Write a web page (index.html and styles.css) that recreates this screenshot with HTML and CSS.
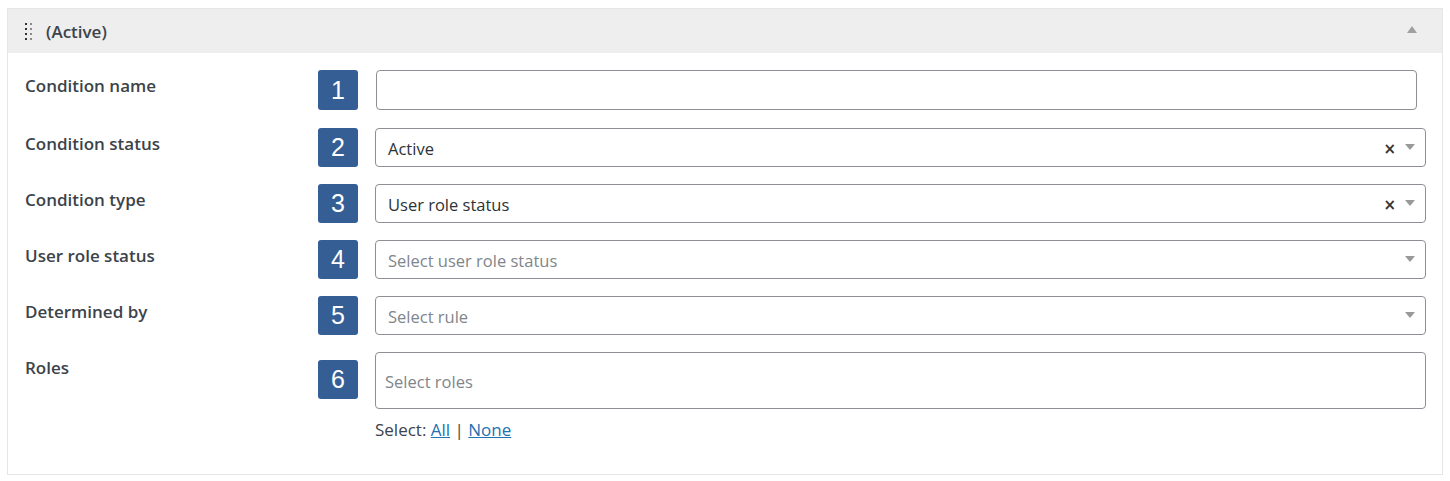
FILE: index.html
```html
<!DOCTYPE html>
<html>
<head>
<meta charset="utf-8">
<link rel="stylesheet" href="styles.css">
</head>
<body>
<div class="panel">
  <div class="panel-head">
    <span class="handle">
      <i></i><i></i><i></i><i></i><i></i><i></i><i></i><i></i>
    </span>
    <span class="head-title">(Active)</span>
    <span class="toggle"></span>
  </div>
  <div class="panel-body">
    <div class="row row-first">
      <div class="label">Condition name</div>
      <div class="badge">1</div>
      <div class="field"><div class="text-input"></div></div>
    </div>
    <div class="row">
      <div class="label">Condition status</div>
      <div class="badge">2</div>
      <div class="field"><div class="select"><span class="value">Active</span><span class="clear">×</span><span class="caret"></span></div></div>
    </div>
    <div class="row">
      <div class="label">Condition type</div>
      <div class="badge">3</div>
      <div class="field"><div class="select"><span class="value">User role status</span><span class="clear">×</span><span class="caret"></span></div></div>
    </div>
    <div class="row">
      <div class="label">User role status</div>
      <div class="badge">4</div>
      <div class="field"><div class="select"><span class="value placeholder">Select user role status</span><span class="caret"></span></div></div>
    </div>
    <div class="row">
      <div class="label">Determined by</div>
      <div class="badge">5</div>
      <div class="field"><div class="select"><span class="value placeholder">Select rule</span><span class="caret"></span></div></div>
    </div>
    <div class="row row-roles">
      <div class="label">Roles</div>
      <div class="badge">6</div>
      <div class="field">
        <div class="multi"><span class="value placeholder">Select roles</span></div>
        <div class="select-links">Select: <a href="#">All</a> | <a href="#">None</a></div>
      </div>
    </div>
  </div>
</div>
</body>
</html>
```
FILE: styles.css
```css
html, body {
  margin: 0;
  padding: 0;
  background: #ffffff;
}
body {
  font-family: "Open Sans", "Noto Sans", sans-serif;
  color: #2c3338;
}
.panel {
  margin: 8px 0 0 7px;
  width: 1436px;
  height: 467px;
  border: 1px solid #e6e6e6;
  box-sizing: border-box;
  display: flex;
  flex-direction: column;
}
.panel-head {
  height: 44px;
  background: #eeeeee;
  display: flex;
  align-items: center;
  padding: 0 0 0 17px;
  position: relative;
}
.handle {
  display: grid;
  grid-template-columns: 2px 2px;
  column-gap: 3px;
  row-gap: 3px;
  margin-top: 1px;
}
.handle i {
  display: block;
  width: 2px;
  height: 2px;
  background: #333;
}
.handle i:nth-child(2n) {
  background: #8a8a8a;
}
.head-title {
  margin-left: 14px;
  font-size: 17px;
  font-weight: 600;
  color: #3c434a;
}
.toggle {
  position: absolute;
  right: 25px;
  top: 17px;
  width: 0;
  height: 0;
  border-left: 5px solid transparent;
  border-right: 5px solid transparent;
  border-bottom: 7px solid #a0a0a0;
}
.panel-body {
  padding: 17px 16px 0 17px;
  display: flex;
  flex-direction: column;
  gap: 17px;
}
.row {
  display: grid;
  grid-template-columns: 276px 40px 1fr;
  column-gap: 17px;
  align-items: start;
}
.row-first {
  margin-bottom: 1px;
}
.label {
  font-size: 17px;
  font-weight: 600;
  color: #3c434a;
  line-height: 20px;
  padding-top: 6px;
}
.badge {
  width: 40px;
  height: 39px;
  background: #355e94;
  border-radius: 3px;
  color: #fff;
  font-family: "Liberation Sans", Arial, sans-serif;
  font-size: 25px;
  display: flex;
  align-items: center;
  justify-content: center;
}
.row-first .badge {
  height: 40px;
}
.row-roles .badge {
  margin-top: 8px;
}
.text-input {
  margin-left: 1px;
  width: 1041px;
  height: 40px;
  border: 1px solid #8c8f94;
  border-radius: 4px;
  box-sizing: border-box;
}
.select {
  height: 39px;
  border: 1px solid #8c8f94;
  border-radius: 4px;
  box-sizing: border-box;
  display: flex;
  align-items: center;
  padding: 2px 10px 0 12px;
}
.value {
  flex: 1;
  font-size: 16.5px;
  color: #2c3338;
}
.placeholder {
  color: #80868b;
}
.clear {
  font-family: "DejaVu Sans", sans-serif;
  font-size: 15px;
  font-weight: 700;
  color: #333;
  margin-right: 9px;
}
.caret {
  width: 0;
  height: 0;
  border-left: 5px solid transparent;
  border-right: 5px solid transparent;
  border-top: 6px solid #999;
  margin-top: -3px;
}
.multi {
  height: 57px;
  border: 1px solid #8c8f94;
  border-radius: 4px;
  box-sizing: border-box;
  display: flex;
  align-items: center;
  padding: 2px 10px 0 9px;
}
.select-links {
  margin-top: 9px;
  font-size: 17px;
  color: #3c434a;
}
.select-links a {
  color: #2271b1;
  text-decoration: underline;
}
```
